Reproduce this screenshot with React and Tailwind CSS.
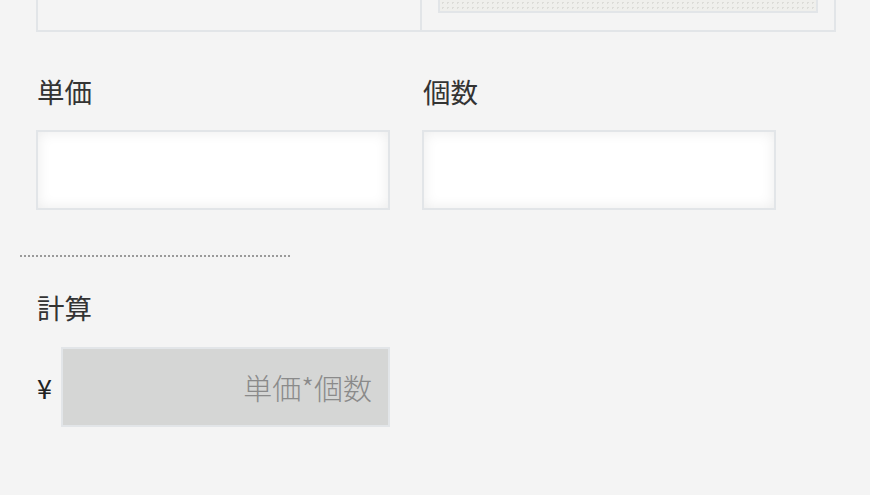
import React from "react";

export default function App() {
  const font = { fontFamily: '"Noto Sans CJK JP", "Noto Sans", sans-serif' };
  return (
    <div
      className="w-[870px] h-[495px] overflow-hidden bg-[#f4f4f4] text-[#333]"
      style={font}
    >
      {/* top table remnant */}
      <div className="ml-[36px] w-[800px] h-[32px] border-2 border-t-0 border-[#e2e5e8] flex">
        <div className="w-[384px] h-full border-r-2 border-[#e2e5e8]" />
        <div className="flex-1 pl-[16px] pr-[16px] pb-[17px]">
          <div className="h-full border-2 border-t-0 border-[#e2e5e8] bg-[#efefec] bg-[radial-gradient(#dcdcd8_1px,transparent_1px)] bg-[length:5px_5px]" />
        </div>
      </div>

      {/* unit price & quantity */}
      <div className="ml-[36px] mt-[41px] grid grid-cols-[354px_354px] gap-x-[32px]">
        <div>
          <div className="text-[27.5px] leading-[36px] pl-[1px] font-normal">単価</div>
          <input
            type="text"
            className="mt-[21px] block w-[354px] h-[80px] border-2 border-[#e2e5e8] bg-white shadow-[inset_0_0_14px_rgba(0,0,0,0.08)] outline-none px-4 text-[26px]"
          />
        </div>
        <div>
          <div className="text-[27.5px] leading-[36px] pl-[1px] font-normal">個数</div>
          <input
            type="text"
            className="mt-[21px] block w-[354px] h-[80px] border-2 border-[#e2e5e8] bg-white shadow-[inset_0_0_14px_rgba(0,0,0,0.08)] outline-none px-4 text-[26px]"
          />
        </div>
      </div>

      {/* dotted separator */}
      <div className="ml-[20px] mt-[45px] w-[270px] border-t-2 border-dotted border-[#9a9a9a]" />

      {/* calculation */}
      <div className="ml-[36px] mt-[32px]">
        <div className="text-[27.5px] leading-[36px] pl-[1px] font-normal">計算</div>
        <div className="mt-[22px] flex items-center">
          <span className="w-[25px] text-[27px] leading-none pl-[1px] text-[#222]">¥</span>
          <input
            type="text"
            readOnly
            placeholder="単価*個数"
            className="block w-[329px] h-[80px] border-2 border-[#e2e5e8] bg-[#d5d6d5] outline-none pr-[16px] text-right text-[29px] font-light placeholder:text-[#8a8a8a]"
            style={font}
          />
        </div>
      </div>
    </div>
  );
}
